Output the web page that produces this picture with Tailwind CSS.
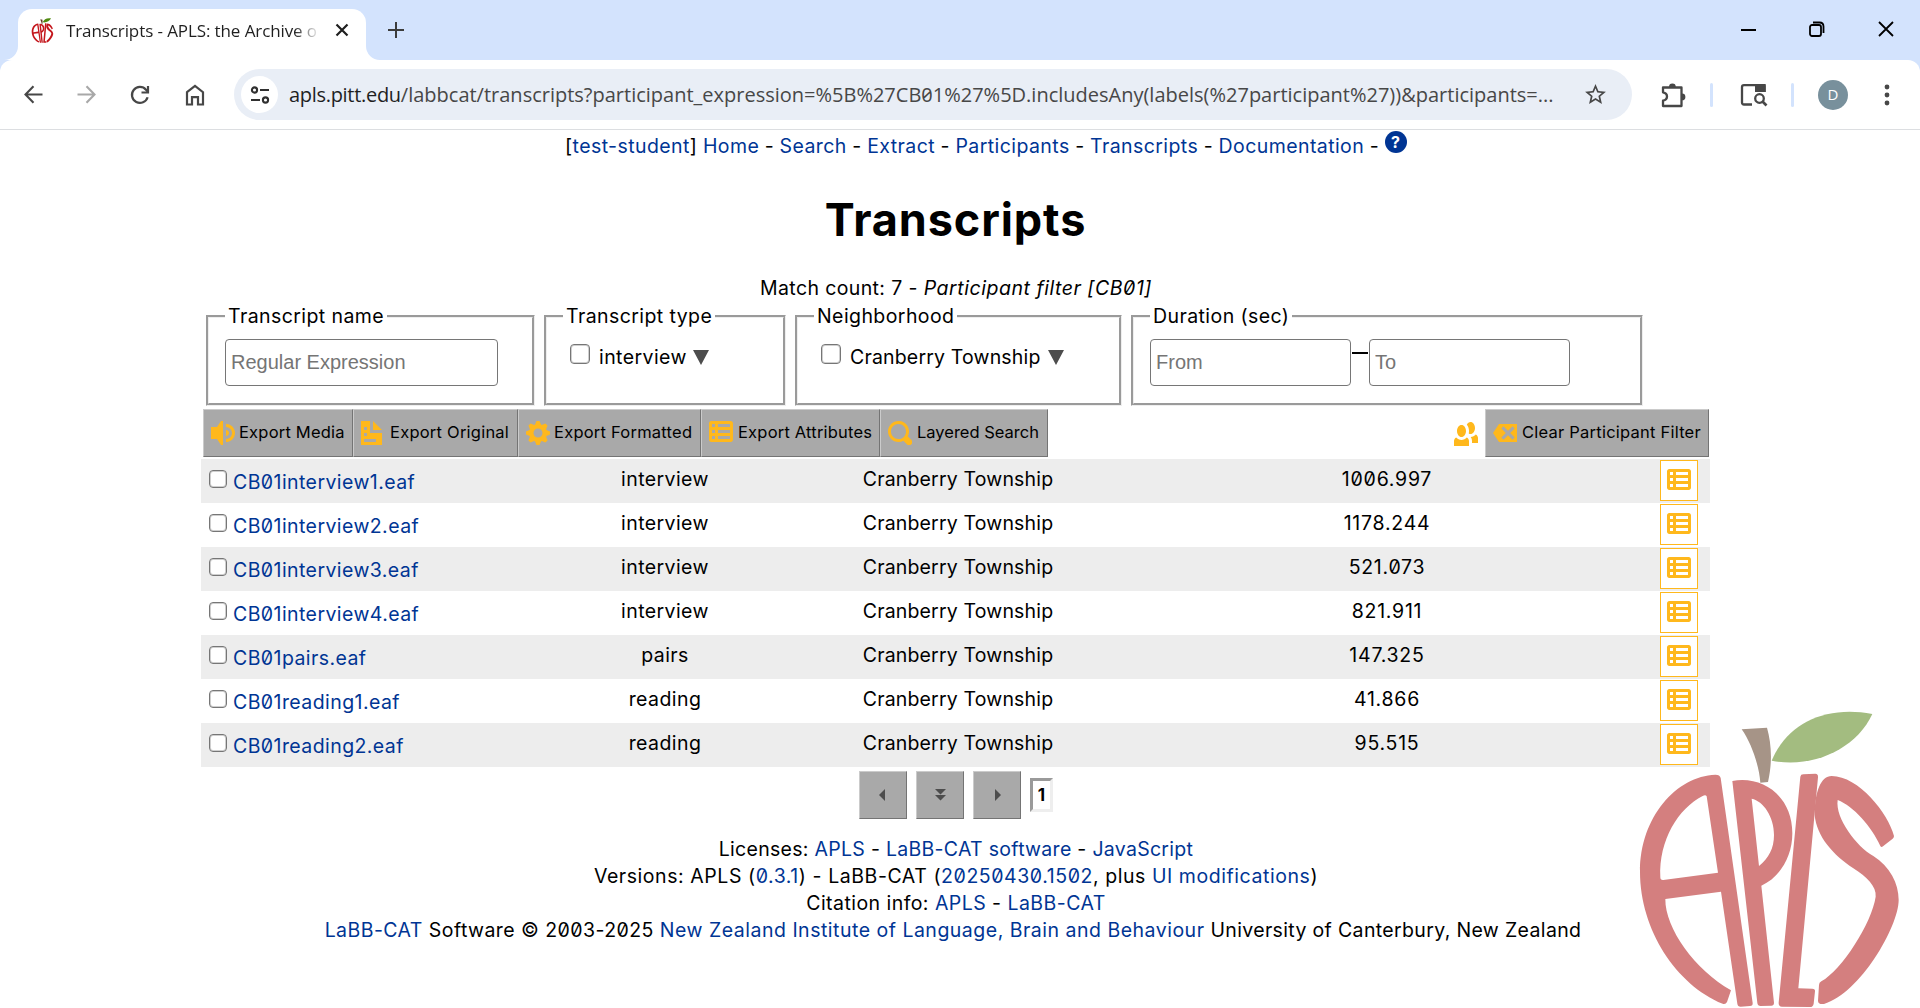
<!DOCTYPE html>
<html lang="en">
<head>
<meta charset="utf-8">
<title>Transcripts - APLS: the Archive of Pittsburgh Language and Speech</title>
<script src="https://cdn.jsdelivr.net/npm/@tailwindcss/browser@4"></script>
</head>
<body class="relative h-[1008px] w-[1920px] overflow-hidden bg-white font-['Inter',sans-serif] text-[19.5px] leading-[27px] tracking-[0.42px] text-black [font-feature-settings:'zero']">

<!-- shared icon shapes -->
<svg class="hidden">
  <symbol id="apple" viewBox="0 0 900 924">
    <g fill="currentColor" fill-rule="evenodd">
      <path d="M302 234Q300 224 286 224C170 228 60 350 60 515C60 690 170 855 308 911Q317 914 321 906L333 871C225 810 135 685 136 597L303 575L352 911Q353 920 362 920L390 918Q399 918 398 909ZM260 289Q257 283 248 288C175 325 116 420 121 532Q121 541 130 540L294 518Z"/>
      <path d="M337 243C430 226 517 290 517 400C517 470 480 532 424 557L462 908Q462 917 454 917L422 918Q413 918 412 909ZM395 296L417 498C446 475 462 445 462 405C462 350 430 303 395 296Z"/>
      <path d="M541 230Q542 223 550 223L586 221Q595 221 594 232L535 865L577 866Q586 866 585 874L581 911Q579 921 570 921L486 920Q475 919 476 908Z"/>
      <path d="M822 408C805 340 715 228 635 228C603 228 584 275 584 345C590 410 640 465 700 505C740 530 770 560 767 590C755 670 665 810 604 844Q597 848 597 855L594 902Q594 914 612 912C720 880 836 680 836 600C836 550 810 500 760 468C710 440 645 355 653 300C700 318 755 380 781 438Q784 443 789 439L818 416Q822 413 822 408Z"/>
    </g>
    <path class="fill-(--stem)" d="M365 88L441 83C454 130 458 185 444 246L421 248C418 200 395 130 365 88Z"/>
    <path class="fill-(--leaf)" d="M455 182C500 75 610 15 757 42C710 145 580 207 455 182Z"/>
  </symbol>
  <symbol id="sheet" viewBox="0 0 8 8"><path d="M.75 0c-.41 0-.75.34-.75.75v5.5c0 .41.34.75.75.75h6.5c.41 0 .75-.34.75-.75v-5.5c0-.41-.34-.75-.75-.75h-6.5zm.25 1h1v1h-1v-1zm2 0h4v1h-4v-1zm-2 2h1v1h-1v-1zm2 0h4v1h-4v-1zm-2 2h1v1h-1v-1zm2 0h4v1h-4v-1z"/></symbol>
</svg>

<!-- tab strip -->
<header class="flex h-[60px] bg-[#d3e3fd] font-['Open_Sans',sans-serif] tracking-normal">
  <div class="relative mt-[9px] ml-[18px] flex h-[51px] w-[348px] items-center rounded-t-[14px] bg-white pb-[9px] pl-[12px]">
    <svg class="absolute bottom-0 -left-[14px] size-[14px] fill-white"><path d="M14 0v14H0A14 14 0 0 0 14 0z"/></svg>
    <svg class="absolute -right-[14px] bottom-0 size-[14px] fill-white"><path d="M0 0v14h14A14 14 0 0 1 0 0z"/></svg>
    <svg class="h-[26px] w-[25px] text-[#c4161c] [--leaf:#4f8a10] [--stem:#5b3a1e]"><use href="#apple"/></svg>
    <div class="ml-[11px] w-[253px] text-[17px] tracking-[-0.1px] whitespace-nowrap text-[#1f1f1f] [mask-image:linear-gradient(to_right,black_228px,transparent_254px)]">Transcripts - APLS: the Archive o</div>
    <svg class="ml-[16px] size-[14px]" viewBox="0 0 14 14" fill="none" stroke="#1f1f1f" stroke-width="2.2"><path d="M1.5 1.5l11 11M12.5 1.5l-11 11"/></svg>
  </div>
  <svg class="mt-[22px] ml-[22px] size-[16px]" viewBox="0 0 16 16" fill="none" stroke="#3c3c3c" stroke-width="2"><path d="M8 0v16M0 8h16"/></svg>
  <div class="mt-[21px] mr-[26px] ml-auto flex h-4 items-center gap-[53px]">
    <svg class="size-[15px]" viewBox="0 0 15 15" stroke="#000" stroke-width="2"><path d="M0 8h15"/></svg>
    <svg class="size-[16px]" viewBox="0 0 16 16" fill="none" stroke="#000" stroke-width="1.8"><rect x="1" y="4" width="11" height="11" rx="2"/><path d="M4 1.5h6.5q4 0 4 4V12"/></svg>
    <svg class="size-[16px]" viewBox="0 0 16 16" fill="none" stroke="#000" stroke-width="1.8"><path d="M1 1l14 14M15 1L1 15"/></svg>
  </div>
</header>

<!-- toolbar -->
<div class="bg-[#d3e3fd]">
<div class="flex h-[70px] items-center rounded-t-[12px] border-b border-[#dcdee1] bg-white pl-[24px] font-['Open_Sans',sans-serif] tracking-normal">
  <svg class="size-[19px]" viewBox="0 0 19 19" fill="none" stroke="#474747" stroke-width="2.1"><path d="M18.500 9.500H1.500M9.500 1.300L1.500 9.500l8 8.200"/></svg>
  <svg class="ml-[34px] size-[19px]" viewBox="0 0 19 19" fill="none" stroke="#a8a8a8" stroke-width="2.1"><path d="M.5 9.500h17M9.500 1.300l8 8.200-8 8.200"/></svg>
  <svg class="ml-[34px] size-[20px]" viewBox="0 0 20 20" fill="none" stroke="#474747" stroke-width="2.2"><path d="M17.600 12.300A8 8 0 1 1 16 4.700L18 7"/><path d="M18 1v6.500h-6.500"/></svg>
  <svg class="ml-[35px] h-[22px] w-[20px]" viewBox="0 0 20 22" fill="none" stroke="#474747" stroke-width="2.200"><path d="M2 8.200L10 2l8 6.200V20.500h-5v-7.300H7v7.300H2z"/></svg>
  <div class="ml-[29px] flex h-[51px] w-[1398px] items-center rounded-full bg-[#e9eef6] pl-[7px]">
    <div class="flex size-[37px] items-center justify-center rounded-full bg-white">
      <svg class="size-[20px]" viewBox="0 0 20 20" fill="none" stroke="#303030" stroke-width="2.100"><circle cx="4.500" cy="5" r="2.600"/><path d="M10 5h9M1 15h9"/><circle cx="15.500" cy="15" r="2.600"/></svg>
    </div>
    <div class="ml-[11px] w-[1264px] text-[20px] whitespace-nowrap text-[#474747]"><span class="tracking-[-0.3px] text-[#1f1f1f]">apls.pitt.edu</span>/labbcat/transcripts?participant_expression=%5B%27CB01%27%5D.includesAny(labels(%27participant%27))&amp;participants=...</div>
    <svg class="ml-[30px] size-[25px]" viewBox="0 0 24 24" fill="#474747"><path d="M22 9.240l-7.190-.62L12 2 9.190 8.630 2 9.240l5.460 4.730L5.820 21 12 17.270 18.180 21l-1.630-7.030L22 9.240zM12 15.400l-3.760 2.270 1-4.280-3.320-2.880 4.380-.38L12 6.100l1.710 4.040 4.380.38-3.320 2.880 1 4.280L12 15.400z"/></svg>
  </div>
  <svg class="ml-[28px] h-[28px] w-[27px]" viewBox="0 0 27 28" fill="#474747"><path fill="none" stroke="#474747" stroke-width="2.300" stroke-linejoin="round" d="M3 6.500h18.500V25H3v-5.300q4-.8 4-4.200T3 11.300z"/><path d="M9 6a3.400 3.400 0 0 1 6.800 0zM22 12.500a3.400 3.400 0 0 1 0 6.800z"/></svg>
  <div class="ml-[23px] h-[24px] w-[3px] rounded-full bg-[#d3e3fd]"></div>
  <svg class="ml-[27px] h-[24px] w-[28px]" viewBox="0 0 28 24"><path fill="none" stroke="#474747" stroke-width="2.300" d="M12 21.500H4Q2 21.500 2 19.500V4Q2 2.200 4 2.200H24.500V9"/><path fill="#474747" d="M15 1.100h9q1.700 0 1.700 1.700V9H15z"/><circle cx="19.500" cy="15.500" r="4.300" fill="#fff" stroke="#474747" stroke-width="2.300"/><path stroke="#474747" stroke-width="2.600" d="M22.500 18.500l4 4"/></svg>
  <div class="ml-[23px] h-[24px] w-[3px] rounded-full bg-[#d3e3fd]"></div>
  <div class="ml-[24px] flex size-[30px] items-center justify-center rounded-full bg-[#78909c] text-[15px] text-white">D</div>
  <svg class="ml-[36px] h-[22px] w-[6px] fill-[#474747]" viewBox="0 0 6 22"><circle cx="3" cy="3" r="2.400"/><circle cx="3" cy="11" r="2.400"/><circle cx="3" cy="19" r="2.400"/></svg>
</div>
</div>

<main class="pt-[3px]">
  <nav class="flex h-[27px] gap-[5.500px] pl-[565px] whitespace-nowrap [&_a]:text-[#003594]">
    <span>[<a>test-student</a>]</span><a>Home</a><span>-</span><a>Search</a><span>-</span><a>Extract</a><span>-</span><a>Participants</a><span>-</span><a>Transcripts</a><span>-</span><a>Documentation</a><span>-</span>
    <span class="-mt-[2px] flex size-[22px] items-center justify-center rounded-full bg-[#003594] text-[16px] leading-none font-bold tracking-normal text-white">?</span>
  </nav>

  <h1 class="mt-[33px] w-[1911px] text-center text-[45px] leading-[54px] font-bold tracking-[0.9px]">Transcripts</h1>
  <p class="mt-[28px] w-[1912px] text-center tracking-[0.380px]">Match count: 7 - <i class="tracking-[0.530px]">Participant filter [CB01]</i></p>

  <!-- filters -->
  <div class="mt-px ml-[206px] flex h-[103px] [&_fieldset]:h-[103px] [&_fieldset]:border-[3px] [&_fieldset]:border-[#eee] [&_fieldset]:[border-style:groove] [&_legend]:px-[3px] [&_fieldset]:px-[16px] [&_legend]:whitespace-nowrap">
    <fieldset class="w-[329px]">
      <legend>Transcript name</legend>
      <input class="mt-[9px] block h-[47px] w-[273px] rounded-[4px] border border-[#767676] px-[5px] font-['Liberation_Sans',sans-serif] text-[20px] tracking-normal placeholder:text-[#757575]" placeholder="Regular Expression">
    </fieldset>
    <fieldset class="ml-[9px] w-[242px]">
      <legend>Transcript type</legend>
      <div class="mt-[14px] flex pl-[7px]">
        <input type="checkbox" class="size-[20px] appearance-none rounded-[4px] border border-[#767676] shadow-[inset_0_0_0_1px_#cfcfcf]">
        <span class="ml-[9px]">interview</span>
        <svg class="mt-[6px] ml-[6px] h-[15px] w-[16px] fill-[#4d4d4d]" viewBox="0 0 16 15"><path d="M0 0h16L8 15z"/></svg>
      </div>
    </fieldset>
    <fieldset class="ml-[9px] w-[327px]">
      <legend>Neighborhood</legend>
      <div class="mt-[14px] flex pl-[7px]">
        <input type="checkbox" class="size-[20px] appearance-none rounded-[4px] border border-[#767676] shadow-[inset_0_0_0_1px_#cfcfcf]">
        <span class="ml-[9px] tracking-[0.170px]">Cranberry Township</span>
        <svg class="mt-[6px] ml-[7px] h-[15px] w-[16px] fill-[#4d4d4d]" viewBox="0 0 16 15"><path d="M0 0h16L8 15z"/></svg>
      </div>
    </fieldset>
    <fieldset class="ml-[9px] w-[512px]">
      <legend>Duration (sec)</legend>
      <div class="mt-[9px] flex">
        <input class="h-[47px] w-[201px] rounded-[4px] border border-[#767676] px-[5px] font-['Liberation_Sans',sans-serif] text-[20px] tracking-normal placeholder:text-[#757575]" placeholder="From">
        <span class="mt-[13px] h-[2px] w-[18px] border-x border-white bg-black"></span>
        <input class="h-[47px] w-[201px] rounded-[4px] border border-[#767676] px-[5px] font-['Liberation_Sans',sans-serif] text-[20px] tracking-normal placeholder:text-[#757575]" placeholder="To">
      </div>
    </fieldset>
  </div>

  <!-- actions -->
  <div class="mt-[3px] ml-[203px] flex h-[48px] w-[1506px] text-[16.500px] leading-[24px] tracking-[0.200px] whitespace-nowrap [&_button]:flex [&_button]:h-[48px] [&_button]:items-center [&_button]:border [&_button]:border-t-[#cbcbcb] [&_button]:border-r-[#747474] [&_button]:border-b-[#747474] [&_button]:border-l-[#cbcbcb] [&_button]:bg-[#a9a9a9] [&_button]:pl-[7px] [&_button_span]:pb-[2px] [&_svg]:size-[24px] [&_svg]:fill-[#ffb81c]">
    <button class="w-[150px]"><svg viewBox="0 0 8 8"><path d="M3.340 0l-1.340 2h-2v4h2l1.340 2h.66v-8h-.66zm1.660 1v1c.17 0 .34.02.5.06.86.22 1.500 1 1.500 1.940s-.63 1.720-1.500 1.940c-.16.04-.33.06-.5.06v1c.25 0 .48-.04.72-.09h.03c1.300-.33 2.250-1.510 2.250-2.910 0-1.400-.95-2.580-2.250-2.910-.23-.06-.49-.09-.75-.09zm0 2v2c.09 0 .18-.01.25-.03.43-.11.75-.51.75-.97 0-.46-.31-.86-.75-.97-.08-.02-.17-.03-.25-.03z"/></svg><span class="ml-[4px]">Export Media</span></button>
    <button class="w-[165px]"><svg viewBox="0 0 8 8"><path d="M0 0v8h7v-4h-4v-4h-3zm4 0v3h3l-3-3zm-3 2h1v1h-1v-1zm0 2h1v1h-1v-1zm0 2h4v1h-4v-1z"/></svg><span class="ml-[5px] tracking-[0.230px]">Export Original</span></button>
    <button class="w-[183px]"><svg viewBox="0 0 8 8"><path d="M3.500 0l-.5 1.190c-.1.03-.19.08-.28.13l-1.190-.5-.72.72.5 1.190c-.05.1-.09.18-.13.28l-1.190.5v1l1.190.5c.04.1.08.18.13.28l-.5 1.190.72.72 1.190-.5c.09.04.18.09.28.13l.5 1.190h1l.5-1.190c.09-.04.19-.08.28-.13l1.190.5.72-.72-.5-1.190c.04-.09.09-.19.13-.28l1.190-.5v-1l-1.190-.5c-.03-.09-.08-.19-.13-.28l.5-1.190-.72-.72-1.190.5c-.09-.04-.19-.09-.28-.13l-.5-1.190h-1zm.5 2.500c.83 0 1.500.67 1.500 1.500s-.67 1.500-1.500 1.500-1.500-.67-1.500-1.500.67-1.500 1.500-1.500z"/></svg><span class="ml-[4px] tracking-[0.230px]">Export Formatted</span></button>
    <button class="w-[179px]"><svg><use href="#sheet"/></svg><span class="ml-[5px]">Export Attributes</span></button>
    <button class="w-[168px]"><svg viewBox="0 0 8 8"><path d="M3.500 0c-1.930 0-3.500 1.570-3.500 3.500s1.570 3.500 3.500 3.500c.59 0 1.170-.14 1.660-.41a1 1 0 0 0 .13.13l1 1a1.020 1.020 0 1 0 1.440-1.440l-1-1a1 1 0 0 0-.16-.13c.27-.49.44-1.060.44-1.660 0-1.930-1.550-3.500-3.500-3.500zm0 1c1.390 0 2.500 1.110 2.500 2.500 0 .66-.24 1.270-.66 1.720-.01.01-.02.02-.03.03a1 1 0 0 0-.13.13c-.44.4-1.040.63-1.690.63-1.390 0-2.500-1.110-2.500-2.500s1.110-2.500 2.500-2.500z"/></svg><span class="ml-[5px] tracking-normal">Layered Search</span></button>
    <svg class="mt-[13px] mr-[7px] ml-auto" viewBox="0 0 8 8"><path d="M5.500 0c-.51 0-.95.35-1.220.88.45.54.72 1.280.72 2.130 0 .29-.03.55-.09.81.19.11.38.19.59.19.83 0 1.500-.9 1.500-2s-.67-2-1.500-2zm-3 1c-.83 0-1.500.9-1.500 2s.67 2 1.500 2 1.500-.9 1.500-2-.67-2-1.500-2zm4.750 3.160c-.43.51-1.020.82-1.690.84.27.38.44.84.44 1.340v.66h2v-1.660c0-.52-.31-.97-.75-1.190zm-6.500 1c-.44.22-.75.67-.75 1.190v1.660h5v-1.660c0-.52-.31-.97-.75-1.190-.45.53-1.060.84-1.750.84s-1.300-.32-1.750-.84z"/></svg>
    <button class="w-[224px]"><svg viewBox="0 -1 8 8"><path d="M2 0l-2 3 2 3h6v-6h-6zm1.500.78l1.500 1.500 1.500-1.500.72.72-1.500 1.500 1.500 1.500-.72.72-1.500-1.500-1.500 1.500-.72-.72 1.500-1.500-1.500-1.500.72-.72z"/></svg><span class="ml-[5px] tracking-[0.230px]">Clear Participant Filter</span></button>
  </div>

  <!-- transcript list -->
  <div id="rows" class="mt-[2px] ml-[201px] w-[1509px]"></div>

  <!-- paging -->
  <div class="mt-[4px] ml-[859px] flex h-[48px] [&_button]:flex [&_button]:h-[48px] [&_button]:w-[48px] [&_button]:items-center [&_button]:justify-center [&_button]:border [&_button]:border-t-[#cbcbcb] [&_button]:border-r-[#747474] [&_button]:border-b-[#747474] [&_button]:border-l-[#cbcbcb] [&_button]:bg-[#a9a9a9] [&_svg]:fill-[#4d4d4d]">
    <button><svg class="mr-[2px] h-[12px] w-[6px]" viewBox="0 0 6 12"><path d="M6 0v12L0 6z"/></svg></button>
    <button class="ml-[9px]"><svg class="h-[12px] w-[11px]" viewBox="0 0 11 12"><path d="M0 0h11L5.500 5.500zM0 6h11L5.500 11.500z"/></svg></button>
    <button class="ml-[9px]"><svg class="ml-[2px] h-[12px] w-[6px]" viewBox="0 0 6 12"><path d="M0 0v12l6-6z"/></svg></button>
    <div class="mt-[7px] ml-[9px] flex h-[34px] w-[23px] items-center justify-center border-[3px] border-t-[#9a9a9a] border-r-[#eee] border-b-[#eee] border-l-[#9a9a9a] text-[17px] font-bold tracking-normal">1</div>
  </div>

  <footer class="mt-[17px] w-[1912px] text-center [&_a]:text-[#003594]">
    <p class="tracking-[0.290px]">Licenses: <a>APLS</a> - <a>LaBB-CAT software</a> - <a>JavaScript</a></p>
    <p class="tracking-[0.560px]">Versions: APLS (<a>0.3.1</a>) - LaBB-CAT (<a>20250430.1502</a>, plus <a>UI modifications</a>)</p>
    <p class="tracking-[0.450px]">Citation info: <a>APLS</a> - <a>LaBB-CAT</a></p>
    <p class="-ml-[6px] tracking-[0.440px]"><a>LaBB-CAT</a> Software © 2003-2025 <a class="tracking-[0.500px]">New Zealand Institute of Language, Brain and Behaviour</a> <span class="tracking-[0.350px]">University of Canterbury, New Zealand</span></p>
  </footer>
</main>

<svg class="absolute top-[700px] left-[1620px] h-[308px] w-[300px] text-[#d47f7f] [--leaf:#a3bc80] [--stem:#a69487]"><use href="#apple"/></svg>

<script>
const transcripts = [
  ['CB01interview1.eaf', 'interview', '1006.997'],
  ['CB01interview2.eaf', 'interview', '1178.244'],
  ['CB01interview3.eaf', 'interview', '521.073'],
  ['CB01interview4.eaf', 'interview', '821.911'],
  ['CB01pairs.eaf', 'pairs', '147.325'],
  ['CB01reading1.eaf', 'reading', '41.866'],
  ['CB01reading2.eaf', 'reading', '95.515'],
];
document.getElementById('rows').innerHTML = transcripts.map(([name, type, duration]) => `
  <div class="flex h-[44px] pt-[7px] odd:bg-[#ededed]">
    <div class="flex w-[364px] pl-[8px]">
      <input type="checkbox" class="mt-[4px] size-[18px] appearance-none rounded-[4px] border border-[#767676] bg-white shadow-[inset_0_0_0_1px_#cfcfcf]">
      <a class="mt-[3px] ml-[6px] text-[#003594]">${name}</a>
    </div>
    <div class="w-[200px] text-center">${type}</div>
    <div class="w-[386px] text-center tracking-[0.170px]">Cranberry Township</div>
    <div class="w-[472px] text-center tracking-[0.750px]">${duration}</div>
    <div class="-mt-[6px] ml-[37px] flex h-[41px] w-[38px] items-center justify-center border border-[#ffb81c] bg-white"><svg class="mt-[1px] size-[24px] fill-[#ffb81c]"><use href="#sheet"/></svg></div>
  </div>`).join('');
</script>
</body>
</html>
